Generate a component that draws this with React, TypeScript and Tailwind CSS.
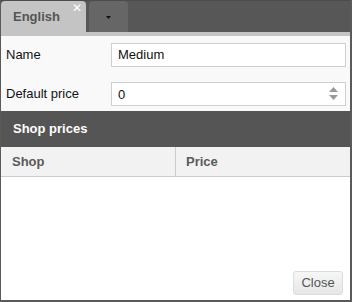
import React from "react";

function Spinner() {
  return (
    <div className="absolute right-[8px] top-[5px] flex flex-col gap-[3px]">
      <svg width="9" height="5" viewBox="0 0 9 5">
        <path d="M0 5 L4.5 0 L9 5 Z" fill="#9a9a9a" />
      </svg>
      <svg width="9" height="5" viewBox="0 0 9 5">
        <path d="M0 0 L9 0 L4.5 5 Z" fill="#9a9a9a" />
      </svg>
    </div>
  );
}

function FieldRow({
  label,
  value,
  spin,
}: {
  label: string;
  value: string;
  spin?: boolean;
}) {
  return (
    <div className="flex items-center">
      <label className="w-[110px] pl-[5px] text-[13px] text-[#111]">{label}</label>
      <div className="relative w-[235px]">
        <input
          readOnly
          value={value}
          className="h-[24px] w-full border border-[#cfcfcf] bg-white px-[6px] text-[13px] text-[#111] outline-none"
        />
        {spin && <Spinner />}
      </div>
    </div>
  );
}

export default function App() {
  return (
    <div
      className="flex h-[302px] w-[352px] flex-col border-b-2 border-l border-r-2 border-[#5a5a5a] bg-white"
      style={{ fontFamily: '"Liberation Sans", Arial, sans-serif' }}
    >
      {/* tabs */}
      <div className="flex h-[32px] items-end gap-[3px] border-t border-[#4c4c4c] bg-[#575757]">
        <div className="relative flex h-[31px] w-[85px] items-center rounded-t-[4px] bg-[#c4c4c4] pl-[12px]">
          <span className="text-[13px] font-bold text-[#555]">English</span>
          <span className="absolute right-[4px] top-[1px] text-[12px] leading-none text-white">
            ✕
          </span>
        </div>
        <div className="flex h-[31px] w-[39px] items-center justify-center rounded-t-[4px] bg-[#666]">
          <svg width="5" height="3" viewBox="0 0 5 3" className="ml-[-1px] mt-[2px]">
            <path d="M0 0 L5 0 L2.5 3 Z" fill="#111" />
          </svg>
        </div>
      </div>
      <div className="h-[4px] bg-[#c4c4c4]" />

      {/* form */}
      <div className="flex flex-col gap-[15px] bg-[#f9f9f9] pb-[5px] pt-[6px]">
        <FieldRow label="Name" value="Medium" />
        <FieldRow label="Default price" value="0" spin />
      </div>

      {/* shop prices */}
      <div className="flex h-[36px] items-center bg-[#555] pl-[12px] text-[13px] font-bold text-white">
        Shop prices
      </div>
      <div className="flex h-[30px] border-b border-[#cccccc] bg-[#f2f2f2] text-[13px] font-bold text-[#5a5a5a]">
        <div className="flex w-[175px] items-center border-r border-[#cccccc] pl-[11px]">Shop</div>
        <div className="flex flex-1 items-center pl-[10px]">Price</div>
      </div>

      <div className="flex flex-1 items-end justify-end pb-[5px] pr-[7px]">
        <button className="h-[24px] w-[50px] rounded-[3px] border border-[#dcdcdc] bg-gradient-to-b from-[#f7f7f7] to-[#e6e6e6] text-[13px] text-[#555]">
          Close
        </button>
      </div>
    </div>
  );
}
